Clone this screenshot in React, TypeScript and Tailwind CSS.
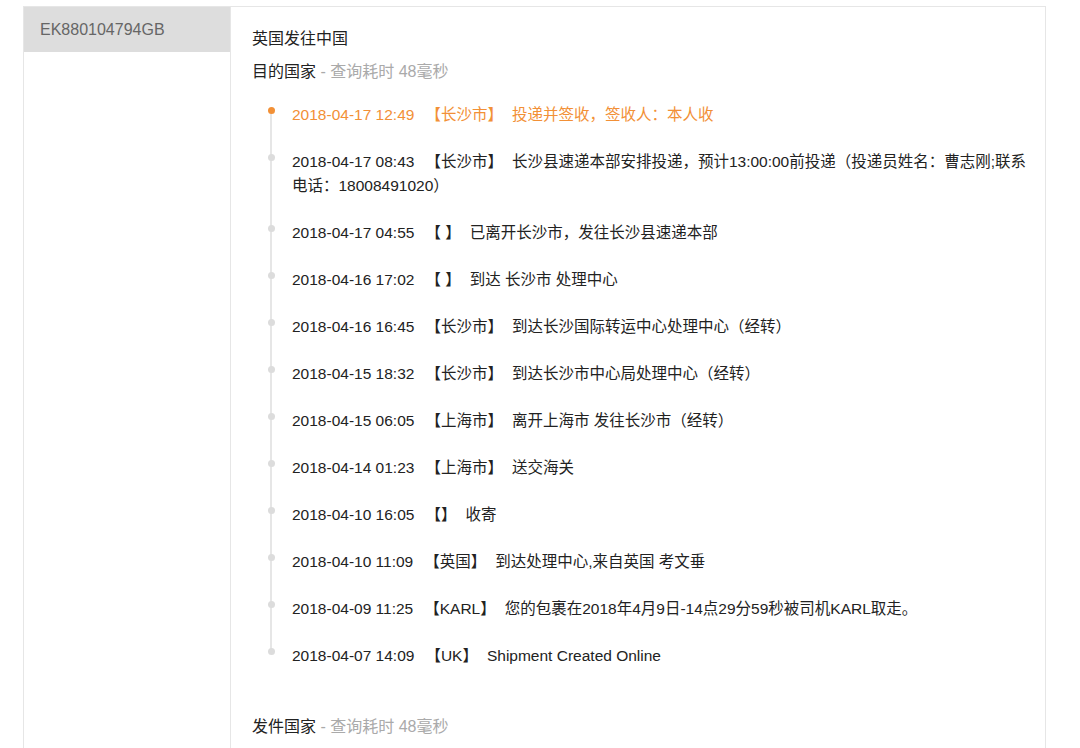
import React from 'react';

interface TrackEvent {
  time: string;
  place: string;
  desc: string;
}

const events: TrackEvent[] = [
  { time: '2018-04-17 12:49', place: '【长沙市】', desc: '投递并签收，签收人：本人收' },
  { time: '2018-04-17 08:43', place: '【长沙市】', desc: '长沙县速递本部安排投递，预计13:00:00前投递（投递员姓名：曹志刚;联系电话：18008491020）' },
  { time: '2018-04-17 04:55', place: '【 】', desc: '已离开长沙市，发往长沙县速递本部' },
  { time: '2018-04-16 17:02', place: '【 】', desc: '到达 长沙市 处理中心' },
  { time: '2018-04-16 16:45', place: '【长沙市】', desc: '到达长沙国际转运中心处理中心（经转）' },
  { time: '2018-04-15 18:32', place: '【长沙市】', desc: '到达长沙市中心局处理中心（经转）' },
  { time: '2018-04-15 06:05', place: '【上海市】', desc: '离开上海市 发往长沙市（经转）' },
  { time: '2018-04-14 01:23', place: '【上海市】', desc: '送交海关' },
  { time: '2018-04-10 16:05', place: '【】', desc: '收寄' },
  { time: '2018-04-10 11:09', place: '【英国】', desc: '到达处理中心,来自英国 考文垂' },
  { time: '2018-04-09 11:25', place: '【KARL】', desc: '您的包裹在2018年4月9日-14点29分59秒被司机KARL取走。' },
  { time: '2018-04-07 14:09', place: '【UK】', desc: 'Shipment Created Online' },
];

const App: React.FC = () => {
  return (
    <div className="min-h-[748px] bg-white font-['Liberation_Sans','Noto_Sans_CJK_SC',sans-serif] text-[#333]">
      <div className="ml-[23px] mt-[6px] w-[1023px] min-h-[800px] border border-[#e6e6e6] flex">
        {/* Left: tracking number list */}
        <div className="w-[207px] shrink-0 border-r border-[#e6e6e6]">
          <div className="h-[45px] bg-[#dddddd] pl-[16px] text-[16px] leading-[45px] text-[#666]">
            EK880104794GB
          </div>
        </div>

        {/* Right: details */}
        <div className="flex-1 pl-[21px] pr-[6px] pt-[20px]">
          <div className="text-[16px] leading-[24px] text-[#222]">英国发往中国</div>
          <div className="mt-[9px] text-[16px] leading-[24px] text-[#222]">
            目的国家 <span className="text-[#aaa]">- 查询耗时 48毫秒</span>
          </div>

          <ul className="mt-[19px]">
            {events.map((ev, i) => {
              const first = i === 0;
              const last = i === events.length - 1;
              return (
                <li key={i} className="relative pl-[40px] pb-[23px]">
                  {!last && (
                    <span className="absolute left-[18px] top-[8px] bottom-[-6px] w-[2px] bg-[#e6e6e6]" />
                  )}
                  <span
                    className={`absolute left-[16px] top-[4px] w-[7px] h-[7px] rounded-full ${
                      first ? 'bg-[#f29036]' : 'bg-[#dcdcdc]'
                    }`}
                  />
                  <p className={`text-[15.5px] leading-[24px] ${first ? 'text-[#f29036]' : 'text-[#222]'}`}>
                    <span>{ev.time}</span>
                    <span className="ml-[11px]">{ev.place}</span>
                    <span className="ml-[9px]">{ev.desc}</span>
                  </p>
                </li>
              );
            })}
          </ul>

          <div className="mt-[24px] text-[16px] leading-[24px] text-[#222]">
            发件国家 <span className="text-[#aaa]">- 查询耗时 48毫秒</span>
          </div>
        </div>
      </div>
    </div>
  );
};

export default App;
